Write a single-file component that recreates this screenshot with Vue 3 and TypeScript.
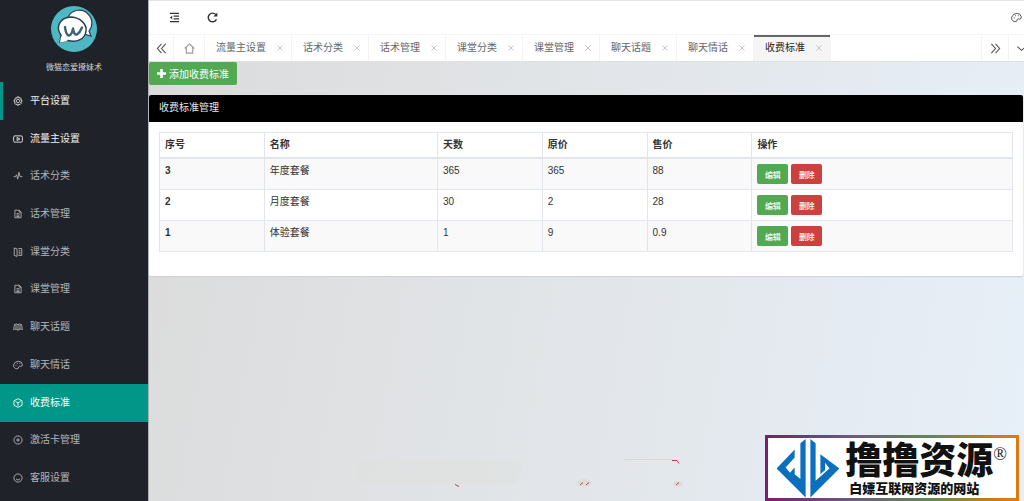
<script setup lang="ts">
import { ref } from 'vue'

interface MenuItem {
  label: string
  icon: string
  head?: boolean
}

interface Plan {
  id: number
  name: string
  days: number
  price: string
  sale: string
}

const icons: Record<string, string[]> = {
  gear: [
    'M6.600 1.500h2.800l.5 1.800 1.800-.5 1.600 2-.9 1.600 1.900.9v1.800l-1.900.9.7 1.900-1.800 1.800-1.700-.8-.8 1.900H7l-.8-1.900-1.800.6-1.700-1.900.7-1.700-1.800-1V7.100l1.800-.8-.6-1.800 1.800-1.700 1.600.6z',
    'M8 5.200a2.800 2.800 0 1 0 .01 0z',
  ],
  video: ['M3 3h10q2 0 2 2v6q0 2-2 2H3q-2 0-2-2V5q0-2 2-2z', 'M6.500 5.500v5L11 8z'],
  pulse: ['M1 9h3l1.600-3 2 7L9.500 2l1.800 7H15'],
  doc: ['M3 2h7l3 3v9H3z', 'M10 2v3h3', 'M5.500 7.500h5M5.500 9.800h5M5.500 12h5'],
  board: ['M2 1.500L6.500 3v12L2 13.500z', 'M8.500 2.500H14v11H8.500', 'M9 6h3M9 8.500h3M9 11h3'],
  book: ['M1 12l1.500-8Q6 2 8 4.500 10 2 13.500 4L15 12', 'M1 12q4-2 7 1 3-3 7-1', 'M8 4.500V13', 'M4.800 4v7M11.200 4v7'],
  palette: [
    'M3 13Q0 11 1 7.500 3 2 8.500 2 14 2 15 7q0 3.500-2.500 3.500Q10 9 9 11q0 3-3 3-2 0-3-1z',
    'M4 8.500h1.500M6 5.500h1.500M10 5.500h1.500',
  ],
  cube: ['M8 1l6.500 3.500v7L8 15l-6.500-3.500v-7z', 'M4 5.500L8 8l4-2.500', 'M8 8v4.500'],
  plus: ['M8 1.500a6.500 6.500 0 1 0 .01 0z', 'M8 5v6M5 8h6'],
  smile: ['M8 1.500a6.500 6.500 0 1 0 .01 0z', 'M4.800 9.500q3.200 3.500 6.400 0'],
}

const menu: MenuItem[] = [
  { label: '平台设置', icon: 'gear', head: true },
  { label: '流量主设置', icon: 'video', head: true },
  { label: '话术分类', icon: 'pulse' },
  { label: '话术管理', icon: 'doc' },
  { label: '课堂分类', icon: 'board' },
  { label: '课堂管理', icon: 'doc' },
  { label: '聊天话题', icon: 'book' },
  { label: '聊天情话', icon: 'palette' },
  { label: '收费标准', icon: 'cube' },
  { label: '激活卡管理', icon: 'plus' },
  { label: '客服设置', icon: 'smile' },
]

const tabs = ['流量主设置', '话术分类', '话术管理', '课堂分类', '课堂管理', '聊天话题', '聊天情话', '收费标准']
const current = ref('收费标准')

const plans: Plan[] = [
  { id: 3, name: '年度套餐', days: 365, price: '365', sale: '88' },
  { id: 2, name: '月度套餐', days: 30, price: '2', sale: '28' },
  { id: 1, name: '体验套餐', days: 1, price: '9', sale: '0.9' },
]
</script>

<template>
  <div class="layout">
    <aside class="side">
      <div class="brand">
        <svg class="avatar" viewBox="0 0 46 46" aria-hidden="true">
          <circle cx="23" cy="23" r="23" fill="#4db8c4" />
          <path d="M17 11C21 3 32 2 37 8c5 5 5 12 1 17l2 5-7-2z" fill="#fff" stroke="#2c3f4d" stroke-width="1.200" />
          <path d="M9 36l1-7C4 21 9 12 19 11c10 0 17 7 16 14-1 8-9 12-18 9.500z" fill="#fff" stroke="#2c3f4d" stroke-width="1.500" />
          <path d="M9 36.500l1-6 7 4.500z" fill="#fff" />
          <path d="M14 21q1 8.500 4 8.500 3-1 4-7 1 7 4 6 3-2 5-7" fill="none" stroke="#3b6672" stroke-width="2.400" stroke-linecap="round" stroke-linejoin="round" />
        </svg>
        <span class="brand-name">微猫恋爱撩妹术</span>
      </div>
      <nav class="menu">
        <a
          v-for="item in menu"
          :key="item.label"
          href="#"
          class="menu-item"
          :class="{ head: item.head, open: item.icon === 'gear', active: item.label === current }"
        >
          <svg class="ico" viewBox="0 0 16 16" aria-hidden="true">
            <path v-for="d in icons[item.icon]" :key="d" :d="d" />
          </svg>
          <span>{{ item.label }}</span>
        </a>
      </nav>
    </aside>

    <div class="main">
      <header class="topbar">
        <button class="tool" type="button" aria-label="收起菜单">
          <svg class="glyph" viewBox="0 0 12 12" aria-hidden="true">
            <path d="M1 1.500h10M5 4.500h6M5 7.500h6M1 10.500h10" />
            <path d="M3.500 4v4L1 6z" fill="currentColor" stroke="none" />
          </svg>
        </button>
        <button class="tool" type="button" aria-label="刷新">
          <svg class="glyph bold" viewBox="0 0 12 12" aria-hidden="true">
            <path d="M10.300 8a4.700 4.700 0 1 1-.8-5.300" />
            <path d="M11.300.5v4.300H7z" fill="currentColor" stroke="none" />
          </svg>
        </button>
        <button class="tool theme" type="button" aria-label="主题">
          <svg class="glyph" viewBox="0 0 16 16" aria-hidden="true">
            <path v-for="d in icons.palette" :key="d" :d="d" />
          </svg>
        </button>
      </header>

      <div class="tabbar">
        <button class="nav-btn" type="button" aria-label="向左">
          <svg class="glyph" viewBox="0 0 12 12" aria-hidden="true"><path d="M6 1L1.500 6 6 11M10.500 1L6 6l4.500 5" /></svg>
        </button>
        <button class="nav-btn home" type="button" aria-label="主页">
          <svg class="glyph" viewBox="0 0 12 12" aria-hidden="true"><path d="M.8 6L6 1l5.200 5M2.500 5v6h7V5" /></svg>
        </button>
        <div v-for="tab in tabs" :key="tab" class="tab" :class="{ active: tab === current }">
          <a href="#" class="tab-link">{{ tab }}</a>
          <button class="close" type="button" :aria-label="'关闭' + tab">
            <svg viewBox="0 0 6 6" aria-hidden="true"><path d="M.5.5l5 5M5.500.5l-5 5" /></svg>
          </button>
        </div>
        <button class="nav-btn next" type="button" aria-label="向右">
          <svg class="glyph" viewBox="0 0 12 12" aria-hidden="true"><path d="M1.500 1L6 6l-4.500 5M6 1l4.500 5L6 11" /></svg>
        </button>
        <button class="nav-btn more" type="button" aria-label="更多">
          <svg class="glyph" viewBox="0 0 12 12" aria-hidden="true"><path d="M1.500 4L6 8l4.500-4" /></svg>
        </button>
      </div>

      <main class="content">
        <button class="btn add" type="button">
          <svg viewBox="0 0 9 9" aria-hidden="true"><path d="M3.200 0h2.600v3.200H9v2.600H5.800V9H3.200V5.800H0V3.200h3.200z" fill="currentColor" /></svg>
          <span>添加收费标准</span>
        </button>

        <section class="panel">
          <h1 class="panel-title">收费标准管理</h1>
          <div class="panel-body">
            <table class="plans">
              <thead>
                <tr>
                  <th scope="col" class="narrow">序号</th>
                  <th scope="col" class="wide">名称</th>
                  <th scope="col" class="narrow">天数</th>
                  <th scope="col" class="narrow">原价</th>
                  <th scope="col" class="narrow">售价</th>
                  <th scope="col">操作</th>
                </tr>
              </thead>
              <tbody>
                <tr v-for="plan in plans" :key="plan.id">
                  <th scope="row">{{ plan.id }}</th>
                  <td>{{ plan.name }}</td>
                  <td>{{ plan.days }}</td>
                  <td>{{ plan.price }}</td>
                  <td>{{ plan.sale }}</td>
                  <td>
                    <div class="actions">
                      <button class="btn small edit" type="button">编辑</button>
                      <button class="btn small remove" type="button">删除</button>
                    </div>
                  </td>
                </tr>
              </tbody>
            </table>
          </div>
        </section>
      </main>
    </div>

    <svg class="specks" viewBox="0 0 330 44" aria-hidden="true">
      <path d="M0 4h162q6 6 4 12-8 8-4 12H0z" fill="#dfe1df" opacity=".6" />
      <ellipse cx="228" cy="26" rx="8" ry="4" fill="#dcdddd" />
      <ellipse cx="322" cy="27" rx="5" ry="3" fill="#dcdddd" />
      <path d="M267 2.500h50" stroke="#d9d9d5" />
      <path d="M316 3.500h5l2 3M99 27.500l4 2M224 28l3-2.500M230 28l3-2.500M320 28l3-2.500" stroke="#c8393c" fill="none" />
    </svg>

    <div class="badge">
      <div class="badge-inner">
        <svg class="badge-logo" viewBox="0 0 66 63" aria-hidden="true">
          <g fill="#0a6fbd">
            <path d="M30.500 1v61.500L0 32l19-20v8.500L9.500 31l4.500 5.500 5-5.500v7l6 5V5.500z" />
            <path d="M35.500 1v61.500L66 32 46 17v21l5-4.500V26l4.500 6L41 45V5.500z" />
          </g>
        </svg>
        <div class="badge-text">
          <strong class="badge-name">撸撸资源</strong>
          <span class="badge-sub">白嫖互联网资源的网站</span>
        </div>
        <span class="reg">®</span>
      </div>
    </div>
  </div>
</template>

<style>
body {
  margin: 0;
}
</style>

<style scoped>
.layout {
  position: relative;
  display: flex;
  min-height: 100vh;
  font-family: "Liberation Sans", "Noto Sans CJK SC", sans-serif;
  font-size: 10px;
  line-height: 14px;
  color: #333;
  background: linear-gradient(100deg, #dbdbdb 14%, #e1e4e7 50%, #e7eff8 100%);
}
button {
  font-family: inherit;
  padding: 0;
  border: 0;
  background: none;
  color: inherit;
  cursor: pointer;
}
a {
  color: inherit;
  text-decoration: none;
}
svg {
  display: block;
}
.side {
  flex: 0 0 148px;
  display: flex;
  flex-direction: column;
  box-sizing: border-box;
  padding-bottom: 4px;
  background: #20222a;
}
.brand {
  display: flex;
  flex-direction: column;
  align-items: center;
  gap: 9px;
  padding: 6px 0 7px;
}
.avatar {
  width: 46px;
  height: 46px;
}
.brand-name {
  font-size: 8px;
  color: #d5d5d7;
}
.menu {
  flex: 1;
  display: grid;
  grid-auto-rows: 1fr;
}
.menu-item {
  display: flex;
  align-items: center;
  gap: 7px;
  padding-left: 10px;
  border-left: 3px solid transparent;
  color: #b4b5b8;
}
.head {
  color: #f0f0f0;
}
.open {
  border-left-color: #009688;
}
.menu-item.active {
  background: #009688;
  border-left-color: #009688;
  color: #fff;
}
.ico {
  width: 10px;
  height: 10px;
  fill: none;
  stroke: currentColor;
  stroke-width: 1.4;
}
.main {
  flex: 1;
  min-width: 0;
  border-left: 1px solid #aeb0b2;
}
.topbar {
  display: flex;
  align-items: center;
  height: 33px;
  padding-left: 6px;
  overflow: hidden;
  border-top: 1px solid #dfe4e9;
  background: #fff;
}
.tool {
  flex: 0 0 38px;
  display: flex;
  justify-content: center;
  color: #333;
}
.theme {
  flex-basis: 15px;
  margin-left: auto;
}
.glyph {
  width: 11px;
  height: 11px;
  fill: none;
  stroke: currentColor;
  stroke-width: 1.2;
}
.bold {
  stroke-width: 1.6;
}
.tabbar {
  display: flex;
  height: 26px;
  overflow: hidden;
  border-top: 1px solid #f4f4f4;
  border-bottom: 1px solid #dfe0e1;
  background: #fff;
}
.nav-btn {
  flex: 0 0 25px;
  display: flex;
  align-items: center;
  justify-content: center;
  box-sizing: border-box;
  border-right: 1px solid #f3f3f3;
  color: #555;
}
.home {
  flex-basis: 31px;
  color: #999;
}
.next {
  flex-basis: 28px;
  margin-left: auto;
  border-left: 1px solid #f3f3f3;
}
.more {
  flex-basis: 15px;
  min-width: 0;
  overflow: hidden;
  padding-left: 7px;
  justify-content: flex-start;
  border-right: 0;
}
.more .glyph {
  flex: none;
}
.tab {
  flex: none;
  display: flex;
  align-items: center;
  gap: 11px;
  box-sizing: border-box;
  padding: 0 8px 0 11px;
  border-right: 1px solid #f3f3f3;
  color: #666;
}
.tab.active {
  background: #f5f5f5;
  box-shadow: inset 0 2px #666;
  color: #222;
}
.close svg {
  width: 6px;
  height: 6px;
  stroke: #c4c4c4;
  fill: none;
}
.btn {
  display: flex;
  align-items: center;
  justify-content: center;
  border-radius: 2px;
  color: #fff;
}
.add {
  gap: 3px;
  height: 23px;
  padding: 0 8px;
  font-size: 10px;
  background: #52a952;
}
.add svg {
  width: 9px;
  height: 9px;
}
.panel {
  margin: 10px 1px 0 0;
  border-radius: 2px;
  overflow: hidden;
  background: #fff;
  box-shadow: 0 1px 1px #d0d2d4;
}
.panel-title {
  margin: 0;
  padding: 6px 10px 7px;
  font-size: 10px;
  line-height: 14px;
  font-weight: 400;
  color: #e8e8e8;
  background: #000;
}
.panel-body {
  padding: 10px 10px 24px;
}
.plans {
  width: 100%;
  table-layout: fixed;
  border-collapse: collapse;
}
.plans th,
.plans td {
  padding: 5px;
  border: 1px solid #e1e5ec;
  text-align: left;
  vertical-align: top;
}
.plans thead th {
  border-bottom-width: 2px;
}
.plans tbody tr:nth-child(odd) {
  background: #f9f9f9;
}
.narrow {
  width: 11%;
}
.wide {
  width: 19%;
}
.actions {
  display: flex;
  gap: 3px;
}
.small {
  width: 31px;
  height: 20px;
  font-size: 8px;
  font-weight: 500;
}
.edit {
  background: #52a952;
}
.remove {
  background: #cc4040;
}
.specks {
  position: absolute;
  left: 356px;
  bottom: 0;
  width: 330px;
  height: 44px;
}
.badge {
  position: absolute;
  right: 5px;
  bottom: 0;
  padding: 3px;
  background: linear-gradient(90deg, #7a1d72, #6f5a80 35%, #5f8a4e 65%, #e07a10 97%);
}
.badge-inner {
  display: flex;
  align-items: flex-start;
  box-sizing: border-box;
  height: 60px;
  padding: 0 9px 0 7px;
  background: #fff;
}
.badge-logo {
  width: 66px;
  height: 60px;
}
.badge-text {
  display: flex;
  flex-direction: column;
  padding: 4px 0 0 4px;
  color: #111;
}
.badge-name {
  font-size: 37px;
  line-height: 40px;
  font-weight: 900;
}
.badge-sub {
  padding-left: 4px;
  font-size: 13px;
  line-height: 14px;
  font-weight: 900;
}
.reg {
  padding-top: 7px;
  font-family: "Liberation Serif", serif;
  font-size: 18px;
  line-height: 18px;
  color: #222;
}
</style>
